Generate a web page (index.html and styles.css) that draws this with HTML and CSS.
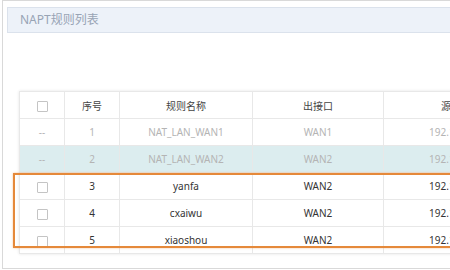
FILE: index.html
```html
<!DOCTYPE html>
<html>
	<head>
		<title>NAPT规则列表</title>
		<link rel="stylesheet" href="styles.css">
	</head>
	<body>
		<div class="panel">
			<div class="panel-title">NAPT规则列表</div>
			<div class="table-wrap">
				<table class="rules">
					<thead>
						<tr>
							<th class="col-check"><span class="box"></span></th>
							<th class="col-no">序号</th>
							<th class="col-name">规则名称</th>
							<th class="col-out">出接口</th>
							<th class="col-src">源地址</th>
						</tr>
					</thead>
					<tbody>
						<tr class="fixed">
							<td>--</td>
							<td>1</td>
							<td>NAT_LAN_WAN1</td>
							<td>WAN1</td>
							<td>192.168.1.0</td>
						</tr>
						<tr class="fixed hover">
							<td>--</td>
							<td>2</td>
							<td>NAT_LAN_WAN2</td>
							<td>WAN2</td>
							<td>192.168.1.0</td>
						</tr>
						<tr>
							<td><span class="box"></span></td>
							<td>3</td>
							<td>yanfa</td>
							<td>WAN2</td>
							<td>192.168.2.0</td>
						</tr>
						<tr>
							<td><span class="box"></span></td>
							<td>4</td>
							<td>cxaiwu</td>
							<td>WAN2</td>
							<td>192.168.3.0</td>
						</tr>
						<tr>
							<td><span class="box"></span></td>
							<td>5</td>
							<td>xiaoshou</td>
							<td>WAN2</td>
							<td>192.168.4.0</td>
						</tr>
					</tbody>
				</table>
				<div class="mark"></div>
			</div>
		</div>
	</body>
</html>
```

FILE: styles.css
```css
html,
body {
	margin: 0;
	height: 100%;
	overflow: hidden;
	background: #fff;
}
body {
	padding: 0 0 0 2px;
	font-family: "Noto Sans", "Noto Sans CJK SC", sans-serif;
	color: #333;
}
.panel {
	border: 1px solid #d9d9d9;
	border-right: none;
	height: 269px;
	box-sizing: border-box;
	padding: 6px 0 0 4px;
}
.panel-title {
	height: 24px;
	line-height: 24px;
	border: 1px solid #dbe2ec;
	border-right: none;
	background: #edf2f9;
	color: #98a4b5;
	font-size: 12px;
	padding-left: 12px;
}
.table-wrap {
	position: relative;
	margin: 58px 0 0 12px;
	width: 504px;
}
.rules {
	border-collapse: collapse;
	table-layout: fixed;
	width: 504px;
	font-size: 10px;
	box-shadow: 0 0 3px #e4e4e4;
}
.rules th,
.rules td {
	height: 26px;
	padding: 0;
	border: 1px solid #e8e8e8;
	text-align: center;
	font-weight: normal;
	white-space: nowrap;
}
.rules th {
	color: #444;
}
.col-check { width: 44px; }
.col-no { width: 54px; }
.col-name { width: 132px; }
.col-out { width: 130px; }
.col-src { width: 144px; }
.rules tr.fixed td {
	color: #b4b4b4;
}
.rules tr.hover td {
	background: #dcedef;
}
.box {
	display: inline-block;
	width: 9px;
	height: 9px;
	border: 1px solid #c4c4c4;
	border-radius: 1px;
	background: #fff;
	vertical-align: middle;
}
/* selected rows outline */
.mark {
	position: absolute;
	left: -6px;
	top: 82px;
	width: 530px;
	height: 71px;
	border: 2px solid #e5893a;
	box-shadow: 0 0 2px rgba(229, 137, 58, 0.5);
}
```
